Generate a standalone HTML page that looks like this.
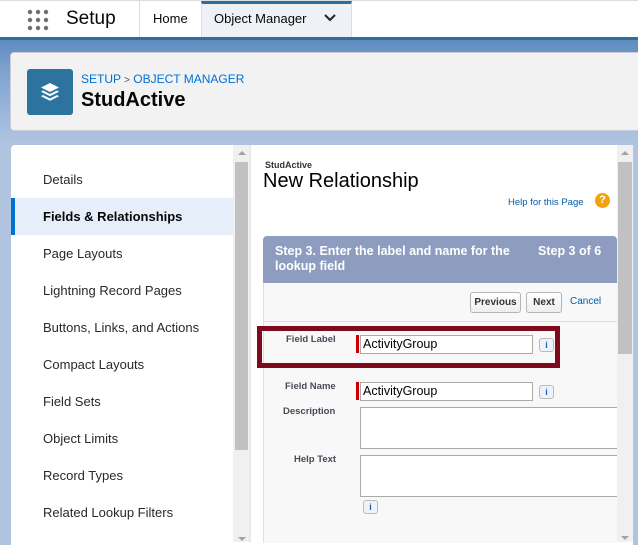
<!DOCTYPE html>
<html><head><style>
*{margin:0;padding:0;box-sizing:border-box}
body{width:638px;height:542px;overflow:hidden;font-family:"Liberation Sans",sans-serif;background:#b0c4df;position:relative}
.abs{position:absolute}
</style></head><body>
<div class="abs" style="left:0;top:0;width:638px;height:37px;background:#fff;border-top:1px solid #ddd"></div>
<div class="abs" style="left:0;top:37px;width:638px;height:3px;background:#2f6d9d"></div>
<div class="abs" style="left:0;top:40px;width:638px;height:105px;background:linear-gradient(#5d8cbe,#7fa3cf 30%,#adc3e0 95%)"></div>
<svg class="abs" style="left:27px;top:9px" width="22" height="22"><g fill="#706e6b"><circle cx="3" cy="3" r="2.2"/><circle cx="11" cy="3" r="2.2"/><circle cx="19" cy="3" r="2.2"/><circle cx="3" cy="11" r="2.2"/><circle cx="11" cy="11" r="2.2"/><circle cx="19" cy="11" r="2.2"/><circle cx="3" cy="19" r="2.2"/><circle cx="11" cy="19" r="2.2"/><circle cx="19" cy="19" r="2.2"/></g></svg>
<div class="abs" style="left:66px;top:8px;font-size:19px;color:#080707">Setup</div>
<div class="abs" style="left:139px;top:1px;width:1px;height:36px;background:#ddd"></div>
<div class="abs" style="left:153px;top:11px;font-size:13px;color:#080707">Home</div>
<div class="abs" style="left:201px;top:1px;width:151px;height:36px;background:#eef1f6;border-top:3px solid #2f6d9d;border-left:1px solid #ddd;border-right:1px solid #ddd"></div>
<div class="abs" style="left:214px;top:11px;font-size:13px;color:#080707">Object Manager</div>
<svg class="abs" style="left:324px;top:14px" width="12" height="8"><path d="M1 1L6 6L11 1" stroke="#222" stroke-width="2" fill="none"/></svg>
<div class="abs" style="left:10px;top:52px;width:640px;height:79px;background:#f2f2f2;border-radius:4px;border:1px solid #ccd"></div>
<div class="abs" style="left:27px;top:69px;width:46px;height:46px;background:#2c73a0;border-radius:3px"></div>
<svg class="abs" style="left:39px;top:81px" width="22" height="22"><g fill="#fff"><path d="M11 2L20 6.5L11 11L2 6.5Z"/><path d="M4 9.5L11 13L18 9.5L20 10.8L11 15.3L2 10.8Z"/><path d="M4 14L11 17.5L18 14L20 15.3L11 19.8L2 15.3Z"/></g></svg>
<div class="abs" style="left:81px;top:72px;font-size:12px;color:#0070d2">SETUP <span style="color:#555;font-size:10px">&gt;</span> OBJECT MANAGER</div>
<div class="abs" style="left:81px;top:89px;font-size:20px;font-weight:bold;color:#080707">StudActive</div>
<div class="abs" style="left:11px;top:145px;width:622px;height:400px;background:#fff;border-radius:4px 4px 0 0"></div>
<div class="abs" style="left:11px;top:198px;width:222px;height:37px;background:#e5eef9;border-left:4px solid #0070d2"></div>
<div class="abs" style="left:43px;top:0;font-size:13px;color:#2b2826;line-height:37px">
<div style="position:absolute;top:161px;white-space:nowrap">Details</div>
<div style="position:absolute;top:198px;white-space:nowrap;font-weight:bold;color:#080707">Fields &amp; Relationships</div>
<div style="position:absolute;top:235px;white-space:nowrap">Page Layouts</div>
<div style="position:absolute;top:272px;white-space:nowrap">Lightning Record Pages</div>
<div style="position:absolute;top:309px;white-space:nowrap">Buttons, Links, and Actions</div>
<div style="position:absolute;top:346px;white-space:nowrap">Compact Layouts</div>
<div style="position:absolute;top:383px;white-space:nowrap">Field Sets</div>
<div style="position:absolute;top:420px;white-space:nowrap">Object Limits</div>
<div style="position:absolute;top:457px;white-space:nowrap">Record Types</div>
<div style="position:absolute;top:494px;white-space:nowrap">Related Lookup Filters</div>
</div>
<div class="abs" style="left:233px;top:145px;width:16px;height:397px;background:#f0f0f0"></div>
<div class="abs" style="left:235px;top:162px;width:13px;height:288px;background:#c1c1c1"></div>
<div class="abs" style="left:238px;top:151px;width:0;height:0;border-left:4px solid transparent;border-right:4px solid transparent;border-bottom:4px solid #a3a3a3"></div>
<div class="abs" style="left:238px;top:537px;width:0;height:0;border-left:4px solid transparent;border-right:4px solid transparent;border-top:4px solid #a3a3a3"></div>
<div class="abs" style="left:249px;top:145px;width:2px;height:397px;background:#e8e8e8"></div>
<div class="abs" style="left:265px;top:160px;font-size:9px;font-weight:bold;color:#333">StudActive</div>
<div class="abs" style="left:263px;top:170px;font-size:20px;color:#000">New Relationship</div>
<div class="abs" style="left:508px;top:197px;font-size:9.5px;color:#015ba7">Help for this Page</div>
<div class="abs" style="left:595px;top:193px;width:15px;height:15px;border-radius:50%;background:#f0a30a;color:#fff;font-size:11px;font-weight:bold;text-align:center;line-height:15px">?</div>
<div class="abs" style="left:263px;top:236px;width:354px;height:47px;background:#8e9dbf;border-radius:4px 4px 0 0"></div>
<div class="abs" style="left:275px;top:244px;font-size:12.5px;font-weight:bold;color:#fff;line-height:15px">Step 3. Enter the label and name for the<br>lookup field</div>
<div class="abs" style="left:538px;top:244px;font-size:12.5px;font-weight:bold;color:#fff">Step 3 of 6</div>
<div class="abs" style="left:263px;top:283px;width:354px;height:260px;background:#f8f8f8;border-left:1px solid #e0e0e0"></div>
<div class="abs" style="left:263px;top:321px;width:354px;height:1px;background:#ddd"></div>
<div class="abs" style="left:470px;top:292px;width:51px;height:21px;border:1px solid #b5b5b5;border-radius:3px;background:linear-gradient(#fff,#eee);font-size:10px;font-weight:bold;color:#333;text-align:center;line-height:19px">Previous</div>
<div class="abs" style="left:526px;top:292px;width:36px;height:21px;border:1px solid #b5b5b5;border-radius:3px;background:linear-gradient(#fff,#eee);font-size:10px;font-weight:bold;color:#333;text-align:center;line-height:19px">Next</div>
<div class="abs" style="left:570px;top:296px;font-size:10px;color:#015ba7">Cancel</div>
<div class="abs" style="left:257px;top:326px;width:303px;height:42px;border:5px solid #7f0a1e"></div>
<div class="abs" style="left:286px;top:334px;font-size:9.5px;font-weight:bold;color:#4a4a56">Field Label</div>
<div class="abs" style="left:356px;top:335px;width:3px;height:18px;background:#c00"></div>
<div class="abs" style="left:360px;top:335px;width:173px;height:19px;border:1px solid #aaa;background:#fff;font-size:12.5px;line-height:17px;padding-left:2px;color:#000">ActivityGroup</div>
<div class="abs" style="left:539px;top:338px;width:15px;height:14px;border:1px solid #bbb;border-radius:3px;background:#eef3fa;font-size:9px;font-weight:bold;color:#1a62b8;text-align:center;line-height:12px">i</div>
<div class="abs" style="left:285px;top:381px;font-size:9.5px;font-weight:bold;color:#4a4a56">Field Name</div>
<div class="abs" style="left:356px;top:382px;width:3px;height:18px;background:#c00"></div>
<div class="abs" style="left:360px;top:382px;width:173px;height:19px;border:1px solid #aaa;background:#fff;font-size:12.5px;line-height:17px;padding-left:2px;color:#000">ActivityGroup</div>
<div class="abs" style="left:539px;top:385px;width:15px;height:14px;border:1px solid #bbb;border-radius:3px;background:#eef3fa;font-size:9px;font-weight:bold;color:#1a62b8;text-align:center;line-height:12px">i</div>
<div class="abs" style="left:283px;top:406px;font-size:9.5px;font-weight:bold;color:#4a4a56">Description</div>
<div class="abs" style="left:360px;top:407px;width:260px;height:42px;border:1px solid #aaa;background:#fff"></div>
<div class="abs" style="left:294px;top:454px;font-size:9.5px;font-weight:bold;color:#4a4a56">Help Text</div>
<div class="abs" style="left:360px;top:455px;width:260px;height:42px;border:1px solid #aaa;background:#fff"></div>
<div class="abs" style="left:363px;top:500px;width:15px;height:14px;border:1px solid #bbb;border-radius:3px;background:#eef3fa;font-size:9px;font-weight:bold;color:#1a62b8;text-align:center;line-height:12px">i</div>
<div class="abs" style="left:617px;top:145px;width:16px;height:397px;background:#f0f0f0"></div>
<div class="abs" style="left:618px;top:162px;width:14px;height:192px;background:#c1c1c1"></div>
<div class="abs" style="left:621px;top:151px;width:0;height:0;border-left:4px solid transparent;border-right:4px solid transparent;border-bottom:4px solid #a3a3a3"></div>
<div class="abs" style="left:621px;top:536px;width:0;height:0;border-left:4px solid transparent;border-right:4px solid transparent;border-top:4px solid #a3a3a3"></div>
</body></html>
